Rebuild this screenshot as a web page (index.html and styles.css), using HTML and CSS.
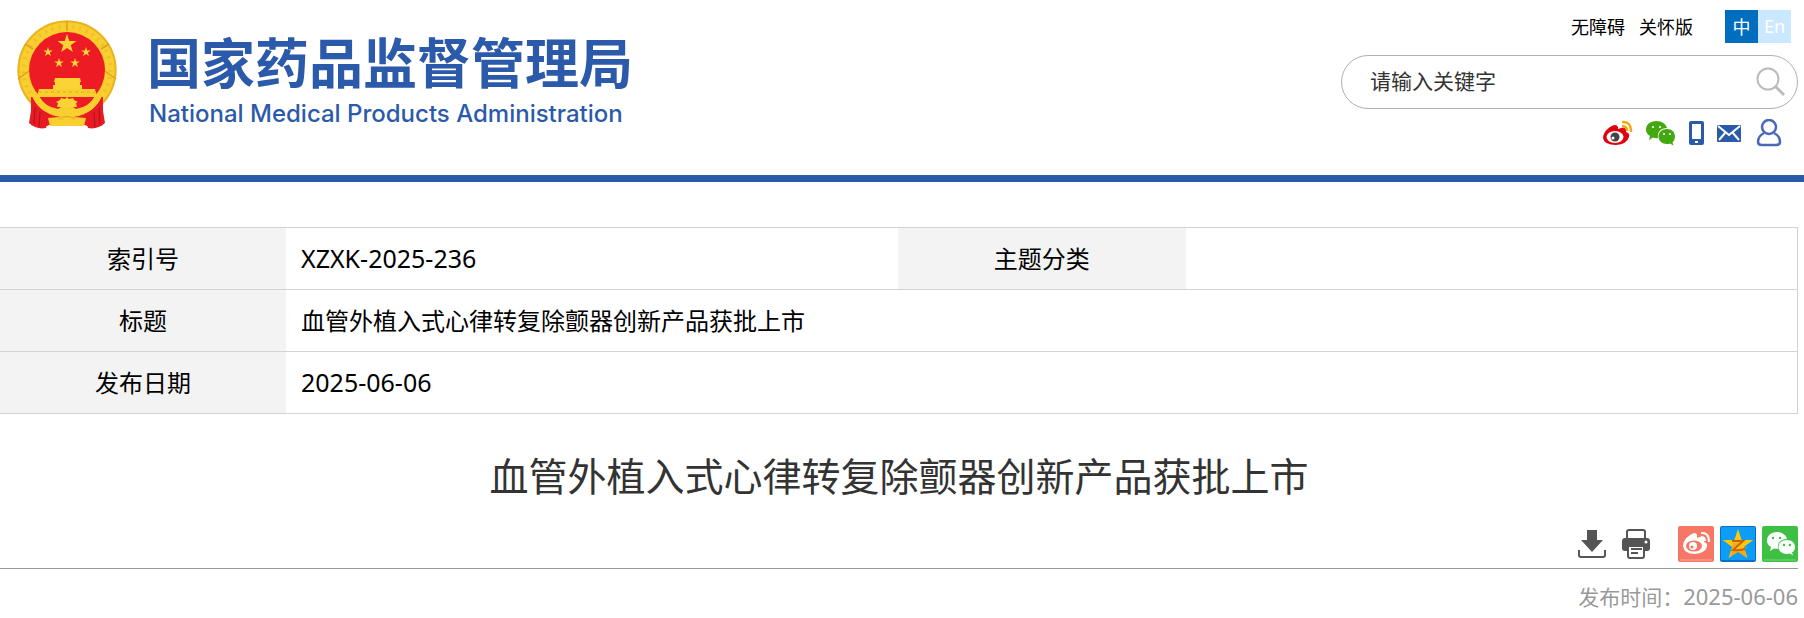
FILE: index.html
```
<!DOCTYPE html>
<html lang="zh-CN">
<head>
    <meta charset="UTF-8">
    <title>血管外植入式心律转复除颤器创新产品获批上市</title>
    <link rel="stylesheet" href="styles.css">
</head>
<body>
    <!-- 公用图形 -->
    <svg class="defs" width="0" height="0" aria-hidden="true">
        <defs>
            <polygon id="star" points="0,-10 2.3,-3.1 9.5,-3.1 3.7,1.2 5.9,8.1 0,3.9 -5.9,8.1 -3.7,1.2 -9.5,-3.1 -2.3,-3.1"/>
        </defs>
    </svg>

    <header class="header">
        <a class="logo" href="#">
            <svg class="emblem" viewBox="0 0 100 110" aria-hidden="true">
                <circle cx="50" cy="50" r="49.500" fill="#f9cf30"/>
                <circle cx="50" cy="50" r="43.500" fill="none" stroke="#e0a820" stroke-width="4" stroke-dasharray="2 5" opacity=".4"/>
                <circle cx="50" cy="50" r="48.500" fill="none" stroke="#e8b424" stroke-width="2"/>
                <path d="M1 59l11-8M99 59l-11-8M8 24l8 5M92 24l-8 5M50 1v10" stroke="#dba31e" stroke-width="1.500"/>
                <circle cx="50" cy="50" r="38" fill="#ed1c24"/>
                <g fill="#fbd335">
                    <use href="#star" transform="translate(50 24)"/>
                    <use href="#star" transform="translate(31 32) scale(.5)"/>
                    <use href="#star" transform="translate(69 32) scale(.5)"/>
                    <use href="#star" transform="translate(42 43) scale(.5)"/>
                    <use href="#star" transform="translate(58 43) scale(.5)"/>
                    <path d="M38 58h25l1 4h-1v3h2v4H36v-4h2v-3h-1z"/>
                </g>
                <path d="M14 77h72v28q-6 3-12 3l-6-3H32l-6 3q-6 0-12-3z" fill="#ed1c24"/>
                <path d="M22 69h56l2 8H20z" fill="#f9cf30"/>
                <path d="M22 72h56" stroke="#e0a820" stroke-dasharray="3 3"/>
                <!-- 齿轮 -->
                <path d="M15 76h7q6 11 19 13l3-2h12l3 2q13-2 19-13h7q-6 15-23 20l-12 2-12-2Q21 91 15 76z" fill="#f9cf30"/>
                <path d="M40 87l1-4-2-1 4-2 1-2 4 1 2-2 2 2 4-1 1 2 4 2-2 1 1 4z" fill="#fbd335"/>
                <path d="M31 98l12-1q7-5 14 0l12 1-2 8H33z" fill="#f9cf30"/>
                <path d="M42 99q8-5 16 0" fill="none" stroke="#dba31e"/>
                <path d="M16 79q5 10 16 15l-3 14q-9 2-17-5zM84 79q-5 10-16 15l3 14q9 2 17-5z" fill="#e61b24"/>
                <path d="M18 87l-1 17M23 92l-1 15M82 87l1 17M77 92l1 15" stroke="#b30f1a" fill="none"/>
            </svg>
            <span class="logo-text">
                <span class="logo-cn">国家药品监督管理局</span>
                <span class="logo-en">National Medical Products Administration</span>
            </span>
        </a>

        <div class="header-right">
            <div class="top-links">
                <a href="#">无障碍</a>
                <a href="#">关怀版</a>
                <div class="lang">
                    <a class="lang-cn" href="#">中</a><a class="lang-en" href="#">En</a>
                </div>
            </div>
            <form class="search">
                <input type="text" aria-label="关键字" placeholder="请输入关键字">
                <button type="button" aria-label="搜索">
                    <svg width="30" height="30" viewBox="0 0 30 30" fill="none" stroke="#bbb" stroke-width="2"><circle cx="12" cy="12" r="10.500"/><path d="M19 19l9 9" stroke-width="3"/></svg>
                </button>
            </form>
            <nav class="socials">
                <a href="#" aria-label="微博">
                    <svg width="30" height="26" viewBox="0 0 30 26">
                        <path d="M0 18Q0 12 7 7q6-4 8 0v2q7-3 8 0l0 3q4 1 3 5-2 7-13 8Q1 25 0 18z" fill="#e1000e"/>
                        <ellipse cx="12" cy="17" rx="8.500" ry="6" fill="#fff"/>
                        <circle cx="12" cy="17" r="4.500" fill="#444"/><circle cx="10" cy="18" r="1.500" fill="#fff"/>
                        <path d="M19 2q9-1 9 10M19 6q5 0 5 5" fill="none" stroke="#efac12" stroke-width="2.500"/>
                    </svg>
                </a>
                <a href="#" aria-label="微信">
                    <svg width="30" height="26" viewBox="0 0 30 26">
                        <path d="M10.500 1C4 1 0 5 0 9.500c0 3 1.500 5 4 6.500l-1 4 4-2.500q3 1 5 .5C11 12 15 8 21 8 20 4 16 1 10.500 1z" fill="#43a811"/>
                        <path d="M21 9c-5 0-8.500 3.500-8.500 7.500S16 24 21 24q2 0 3-.5l3.500 2-1-3Q29 20 29 16.500C29 12.500 26 9 21 9z" fill="#43a811"/>
                        <g fill="#fff"><circle cx="7" cy="7" r="1"/><circle cx="14" cy="7" r="1"/><circle cx="18" cy="14" r="1"/><circle cx="24" cy="14" r="1"/></g>
                    </svg>
                </a>
                <a href="#" aria-label="手机">
                    <svg width="15" height="26" viewBox="0 0 15 26"><path fill-rule="evenodd" d="M2 1h11q2 0 2 2v20q0 2-2 2H2q-2 0-2-2V3q0-2 2-2zM3 4v15h9V4zM6 21v2h3v-2z" fill="#2b5aaa"/></svg>
                </a>
                <a href="#" aria-label="邮箱">
                    <svg width="24" height="26" viewBox="0 0 24 26"><rect y="5" width="24" height="17" rx="1" fill="#2b5aaa"/><path d="M1 6l11 9L23 6M2 20l6-7M22 20l-6-7" fill="none" stroke="#fff" stroke-width="2"/></svg>
                </a>
                <a class="user" href="#" aria-label="登录">
                    <svg width="26" height="28" viewBox="0 0 26 28" fill="none" stroke="#4a68b5" stroke-width="2.500"><circle cx="13" cy="8" r="7"/><path d="M8 14Q2 17 2 23q0 3 4 3h14q4 0 4-3 0-6-6-9"/></svg>
                </a>
            </nav>
        </div>
    </header>

    <main class="content">
        <table class="info">
            <tr>
                <th class="first" scope="row">索引号</th>
                <td><span class="num">XZXK-2025-236</span></td>
                <th scope="row">主题分类</th>
                <td></td>
            </tr>
            <tr>
                <th scope="row">标题</th>
                <td colspan="3">血管外植入式心律转复除颤器创新产品获批上市</td>
            </tr>
            <tr>
                <th scope="row">发布日期</th>
                <td colspan="3"><span class="num">2025-06-06</span></td>
            </tr>
        </table>

        <h1 class="title">血管外植入式心律转复除颤器创新产品获批上市</h1>

        <div class="tools">
            <button type="button" aria-label="下载">
                <svg width="28" height="28" viewBox="0 0 28 28"><path d="M9 0h10v10h6L14 22 3 10h6z" fill="#555"/><path d="M1 20v5q0 2 2 2h22q2 0 2-2v-5" fill="none" stroke="#555" stroke-width="2"/></svg>
            </button>
            <button type="button" aria-label="打印">
                <svg width="30" height="30" viewBox="0 0 30 30"><path d="M6 9V3q0-2 2-2h14q2 0 2 2v6" fill="none" stroke="#555" stroke-width="2"/><path d="M4 9h22q3 0 3 3v7q0 3-3 3h-2v-6H6v6H4q-3 0-3-3v-7q0-3 3-3z" fill="#555"/><circle cx="25" cy="13" r="1.500" fill="#fff"/><path d="M7 17h16v10q0 2-2 2H9q-2 0-2-2z" fill="#fff" stroke="#555" stroke-width="2"/><path d="M10 20h11M10 24h7" stroke="#555" stroke-width="2"/></svg>
            </button>
            <div class="share">
                <a href="#" aria-label="分享到微博">
                    <svg width="36" height="36" viewBox="0 0 36 36">
                        <rect width="36" height="36" rx="2" fill="#f67766"/><path d="M2 34h32" stroke="#fba89c"/>
                        <path d="M5 20Q5 14 12 9q6-4 7 0v3q7-3 8 1l-1 3q4 1 3 5-2 6-12 7Q6 28 5 20z" fill="#fff"/>
                        <ellipse cx="16" cy="20" rx="8" ry="5.500" fill="#f67766"/><circle cx="15" cy="20" r="4" fill="#fff"/><circle cx="14" cy="21" r="1.500" fill="#f67766"/>
                        <path d="M23 7q8-1 8 9M23 11q4 0 4 4" fill="none" stroke="#fff" stroke-width="2"/>
                    </svg>
                </a>
                <a href="#" aria-label="分享到QQ空间">
                    <svg width="36" height="36" viewBox="0 0 36 36">
                        <rect width="36" height="36" rx="2" fill="#0a6fc8"/><rect x="1" y="1" width="34" height="33" rx="1" fill="#0d9df5"/>
                        <use href="#star" transform="translate(18 19) scale(1.600)" fill="#fdc70c"/>
                        <path d="M13 17l10-1-9 8 14-3-4 2 3 9-9-6-8 5 2-8z" fill="#f8a812"/>
                        <path d="M12 15h11l-10 9q6 1 12-1" fill="none" stroke="#c8640a" stroke-width="2"/>
                    </svg>
                </a>
                <a href="#" aria-label="分享到微信">
                    <svg width="36" height="36" viewBox="0 0 36 36">
                        <rect width="36" height="36" rx="2" fill="#3ec044"/><path d="M2 34h32" stroke="#7bd67f"/>
                        <path d="M15 6C9 6 5 10 5 14.500c0 3 1 5 4 6.500l-1 4 4-2.500 4 .5C15 17 19 13 25 13 24 9 20 6 15 6z" fill="#fff"/>
                        <path d="M25 14c-5 0-8.500 3-8.500 7s3.500 7 8.500 7l3-.5 3 2-1-3q3-2 3-5.500c0-4-3-7-8-7z" fill="#fff"/>
                        <g fill="#3ec044"><circle cx="11" cy="12" r="1.200"/><circle cx="18" cy="12" r="1.200"/><circle cx="22" cy="19" r="1.200"/><circle cx="28" cy="19" r="1.200"/></g>
                    </svg>
                </a>
            </div>
        </div>
        <p class="pub">发布时间：<time class="num" datetime="2025-06-06">2025-06-06</time></p>
    </main>
</body>
</html>
```

FILE: styles.css
```
* {
    box-sizing: border-box;
}
body {
    margin: 0;
    font-family: "Noto Sans CJK SC", sans-serif;
    color: #000;
    background-color: #fff;
}
a {
    color: inherit;
    text-decoration: none;
}
svg {
    display: block;
}
button {
    padding: 0;
    border: none;
    background: none;
    cursor: pointer;
}
.defs {
    position: absolute;
}
.num {
    font-family: "Noto Sans", sans-serif;
}

/* 页头 */
.header {
    display: flex;
    justify-content: space-between;
    min-height: 182px;
    padding: 10px 6px 0 17px;
    border-bottom: 7px solid #2b5aaa;
}
.logo {
    display: flex;
    align-items: flex-start;
    gap: 30px;
    padding-top: 10px;
    color: #2b5aaa;
}
.emblem {
    width: 100px;
    height: 110px;
}
.logo-text {
    display: flex;
    flex-direction: column;
    padding-top: 10px;
}
.logo-cn {
    font-size: 54px;
    font-weight: bold;
    line-height: 62px;
}
.logo-en {
    padding-left: 2px;
    font-family: Inter, sans-serif;
    font-size: 24px;
    font-weight: 500;
    line-height: 44px;
}
.header-right {
    width: 457px;
}
.top-links {
    display: flex;
    justify-content: flex-end;
    gap: 14px;
    padding-right: 7px;
    font-size: 18px;
    line-height: 33px;
}
.lang {
    display: flex;
    margin-left: 18px;
    color: #fff;
    text-align: center;
}
.lang a {
    width: 33px;
}
.lang-cn {
    background-color: #006dbf;
}
.lang-en {
    background-color: #cae8ff;
    font-family: "Noto Sans", sans-serif;
}
.search {
    display: flex;
    align-items: center;
    height: 54px;
    margin-top: 12px;
    padding: 0 11px 0 28px;
    border: 1px solid #b0b0b0;
    border-radius: 27px;
}
.search input {
    flex: 1;
    min-width: 0;
    padding: 0 0 4px;
    border: none;
    outline: none;
    background: none;
    font-family: inherit;
    font-size: 21px;
}
.search input::placeholder {
    color: #333;
}
.socials {
    display: flex;
    justify-content: flex-end;
    align-items: center;
    gap: 13px;
    margin-top: 10px;
    padding-right: 16px;
}
.user {
    margin-left: 2px;
}

/* 信息表 */
.content {
    padding: 45px 6px 0 0;
}
.info {
    width: 100%;
    border-collapse: collapse;
    table-layout: fixed;
    border: 1px solid #d3d3d3;
    border-left: none;
    font-size: 24px;
    line-height: 36px;
}
.info tr {
    height: 62px;
    border-bottom: 1px solid #d3d3d3;
}
.info th {
    width: 16%;
    padding: 0 0 2px;
    background-color: #f3f3f3;
    font-weight: normal;
}
.info .first {
    width: 286px;
}
.info td {
    padding: 0 15px 2px;
}
.info .num {
    font-size: 25px;
}

/* 正文 */
.title {
    margin: 28px 0 0;
    color: #333;
    font-size: 39px;
    font-weight: normal;
    line-height: 64px;
    text-align: center;
}
.tools {
    display: flex;
    justify-content: flex-end;
    align-items: center;
    gap: 15px;
    padding: 20px 0 6px;
    border-bottom: 1px solid #999;
}
.share {
    display: flex;
    gap: 6px;
    margin-left: 12px;
}
.pub {
    margin: 11px 0 0;
    color: #999;
    font-size: 21px;
    line-height: 32px;
    text-align: right;
}
.pub .num {
    font-size: 22px;
}
```
